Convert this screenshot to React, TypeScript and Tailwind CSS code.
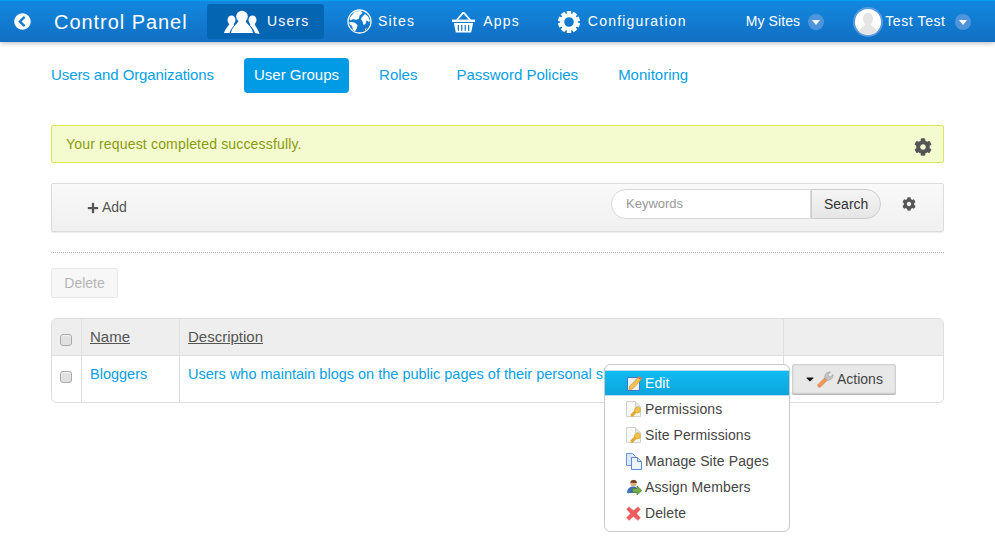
import { FaCaretDown, FaChevronCircleLeft, FaCog, FaPlus } from "react-icons/fa";

const font = "font-['Liberation_Sans',Arial,sans-serif]";

function UsersIcon() {
  return (
    <svg width="36" height="24" viewBox="0 0 36 24" fill="white">
      <circle cx="18" cy="6.500" r="5.800" />
      <path d="M14.500 11c-1 3-6 5-7.500 12h22c-1.500-7-6.500-9-7.500-12z" />
      <ellipse cx="7.500" cy="10" rx="4" ry="4.500" />
      <path d="M5.500 13.500C5 16 1.500 18 0 23h5.500c1-3 3-6 4.500-7.500l-.5-2z" />
      <ellipse cx="28.500" cy="10" rx="4" ry="4.500" />
      <path d="M30.500 13.500c.5 2.500 3.500 5 5 10.500L31 23c-1-3-3-6-5-7.500l.5-2z" />
    </svg>
  );
}

function GlobeIcon() {
  return (
    <svg width="25" height="25" viewBox="0 0 25 25">
      <circle cx="12.500" cy="12.500" r="11.500" fill="none" stroke="white" strokeWidth="1.300" />
      <path
        fill="white"
        d="M8 2.500 14 2l1.500 2-3 2.500-.5 3-3 1.500L6.500 10 3 11.500 2.500 9zM2.500 13l5 .5 3 2.500-.5 3-2 3.500-2-1.500-1-4-2.500-2zM15 8l3-3 3 2.500 2 4-1 1.500-2.500-1.500-1 3.500-2 1-1-3.500-1.500-2.500zM18 20l2-1-2 3z"
      />
    </svg>
  );
}

function BasketIcon() {
  return (
    <svg width="25" height="24" viewBox="0 0 26 24" fill="white">
      <path d="M5 10 12 1.500h2L21 10h-2.300L13 3.500 7.300 10z" />
      <path d="M1 9.500h24v2.500H1z" />
      <path d="M3 13h20l-2 10H5zM7 15v6h1.300v-6zm3.500 0v6h1.300v-6zm3.700 0v6h1.300v-6zm3.500 0v6H19v-6z" fillRule="evenodd" />
    </svg>
  );
}

function ConfigIcon() {
  return (
    <svg width="22" height="22" viewBox="0 0 22 22" fill="white">
      <circle cx="11" cy="11" r="6.800" fill="none" stroke="white" strokeWidth="4" />
      {[0, 36, 72, 108, 144, 180, 216, 252, 288, 324].map((deg) => (
        <rect key={deg} x="8.800" y="0" width="4.400" height="5" transform={`rotate(${deg} 11 11)`} />
      ))}
    </svg>
  );
}

function EditIcon() {
  return (
    <svg width="16" height="16" viewBox="0 0 16 16">
      <rect x="1.500" y="2.500" width="12" height="13" fill="#e8f1fb" stroke="#3f78cf" />
      <path d="M3.500 11.500 12 2.500 15 5 6.500 14 3 14.800z" fill="#f5c050" stroke="#c98a1b" strokeWidth=".6" />
      <path d="M12 2.500 13.500 1 16 3.500 15 5z" fill="#e8764a" />
    </svg>
  );
}

function PermissionIcon() {
  return (
    <svg width="16" height="16" viewBox="0 0 16 16">
      <path d="M.500.500h9l5 5v10H.500z" fill="#f7f7f5" stroke="#d2d2cc" />
      <path d="M9.500.500v5h5" fill="#e6e6e0" stroke="#d2d2cc" />
      <path d="M5.500 16 4.500 13.500 9.500 8.500l2 2L7 15.500z" fill="#e0a92c" />
      <circle cx="11.500" cy="9" r="3" fill="#f2c14a" stroke="#c9951e" strokeWidth=".5" />
    </svg>
  );
}

function PagesIcon() {
  return (
    <svg width="17" height="17" viewBox="0 0 17 17">
      <path d="M.500.500h6l3 3v9h-9z" fill="#dbe8f8" stroke="#6c94d6" />
      <path d="M5.500 4.500h6l4 4v8h-10z" fill="#eef4fc" stroke="#5f8ad2" />
      <path d="M11.500 4.500v4h4" fill="#c9dbf3" stroke="#5f8ad2" />
    </svg>
  );
}

function MembersIcon() {
  return (
    <svg width="16" height="16" viewBox="0 0 16 16">
      <circle cx="7.500" cy="4" r="3.200" fill="#e0ad85" />
      <path d="M4.300 4c0-3.500 6.500-4.200 6.500 0-2 0-4-.8-6.500 0z" fill="#6d3f1e" />
      <path d="M1 14c0-4 2.500-6.500 6-6.500s5 2 5 6.500z" fill="#3f6fb5" />
      <path d="M2.500 11 .5 13l2 2z" fill="#4a8ed8" />
      <path d="M6.500 9.500H11V7l5 4.500-5 4.500v-2.500H6.500z" fill="#74ab4c" stroke="#4a7a2e" strokeWidth=".6" />
    </svg>
  );
}

function DeleteIcon() {
  return (
    <svg width="15" height="15" viewBox="0 0 15 15">
      <path d="M3 .8 7.500 4.600 12 .8 14.500 3.200 10.600 7.500 14.500 11.800 12 14.400 7.500 10.500 3 14.400.5 11.800 4.400 7.500.5 3.200z" fill="#ef5a5e" stroke="#e58a8c" strokeWidth=".5" />
    </svg>
  );
}

function WrenchIcon() {
  return (
    <svg width="17" height="17" viewBox="0 0 17 17">
      <path d="M1 13.500 8.500 6l2.500 2.500L3.500 16a1.800 1.800 0 0 1-2.500-2.500z" fill="#f0955a" stroke="#d97a3c" strokeWidth=".5" />
      <path d="M8 7.500C7 4 9.500.5 13.500 1L11 3.500l.5 2 2 .5L16 3.500c.5 4-3 6.500-6.500 5.500z" fill="#c4c4c4" stroke="#8d8d8d" strokeWidth=".5" />
    </svg>
  );
}

function Caret() {
  return (
    <span className="flex h-4 w-4 items-center justify-center rounded-full bg-[#4f95dc]">
      <span className="mt-[1px] h-0 w-0 border-x-[4.500px] border-t-[5px] border-x-transparent border-t-white" />
    </span>
  );
}

function Checkbox() {
  return <span className="block h-[12px] w-[12px] rounded-[3px] border border-[#a9a9a9] bg-[#e0e0e0] shadow-[inset_0_1px_1px_#f5f5f5]" />;
}

const menuItems = [
  { label: "Permissions", icon: <PermissionIcon /> },
  { label: "Site Permissions", icon: <PermissionIcon /> },
  { label: "Manage Site Pages", icon: <PagesIcon /> },
  { label: "Assign Members", icon: <MembersIcon /> },
  { label: "Delete", icon: <DeleteIcon /> },
];

function ActionsMenu() {
  return (
    <div className="absolute left-[553px] top-[46px] h-[168px] w-[186px] rounded-[6px] border border-[#c8c8c8] bg-white pt-[5px]">
      <div className="flex h-[26px] items-center border-y border-[#b5dff2] bg-gradient-to-b from-[#10bcf2] to-[#0ba5dc] pl-[21px] text-[14px] tracking-[0.100px] text-white">
        <span className="flex w-[19px] shrink-0"><EditIcon /></span>
        <span>Edit</span>
      </div>
      {menuItems.map((item) => (
        <div key={item.label} className="flex h-[26px] items-center pl-[21px] text-[14px] tracking-[0.100px] text-[#444]">
          <span className="flex w-[19px] shrink-0">{item.icon}</span>
          <span>{item.label}</span>
        </div>
      ))}
    </div>
  );
}

export default function App() {
  return (
    <div className={`${font} h-[537px] w-[995px] overflow-hidden bg-white`}>
      <header className="flex h-[42px] items-center border-t-[1px] border-[#00a0ee] bg-gradient-to-b from-[#1288e0] to-[#116fc2] text-white shadow-[0_1px_5px_rgba(0,0,0,0.3)]">
        <FaChevronCircleLeft className="ml-[14px] h-[17px] w-[17px]" />
        <span className="ml-[23px] w-[133px] whitespace-nowrap text-[20px] tracking-[0.950px]">Control Panel</span>
        <nav className="ml-[20px] flex items-center text-[14px] tracking-[1.200px]">
          <span className="flex h-[35px] w-[117px] items-center rounded-[3px] bg-[#0465b3] pl-[17px]">
            <UsersIcon />
            <span className="ml-[7px]">Users</span>
          </span>
          <span className="ml-[23px] flex items-center">
            <GlobeIcon />
            <span className="ml-[6px]">Sites</span>
          </span>
          <span className="ml-[36px] flex items-center">
            <BasketIcon />
            <span className="ml-[7px]">Apps</span>
          </span>
          <span className="ml-[38px] flex items-center">
            <ConfigIcon />
            <span className="ml-[8px]">Configuration</span>
          </span>
        </nav>
        <span className="ml-[59px] flex items-center gap-[8px] text-[14px] tracking-[0.100px]">
          My Sites
          <Caret />
        </span>
        <span className="ml-[29px] flex items-center text-[14px]">
          <span className="relative flex h-[30px] w-[30px] items-center justify-center overflow-hidden rounded-full border-2 border-[#5c9be0] bg-white">
            <svg width="26" height="26" viewBox="0 0 26 26" fill="#e4e4e4">
              <ellipse cx="13" cy="10" rx="5" ry="6.500" />
              <path d="M10 15c0 3-5 3-6 8 3 3 15 3 18 0-1-5-6-5-6-8z" />
            </svg>
          </span>
          <span className="ml-[2px] tracking-[0.600px]">Test Test</span>
          <span className="ml-[9px]"><Caret /></span>
        </span>
      </header>

      <main className="px-[51px]">
        <div className="mt-[16px] flex items-center text-[15px] text-[#089fe6]">
          <span className="tracking-[-0.090px]">Users and Organizations</span>
          <span className="ml-[30px] flex h-[35px] items-center rounded-[4px] bg-[#009ae5] px-[10px] text-white">User Groups</span>
          <span className="ml-[30px]">Roles</span>
          <span className="ml-[39px]">Password Policies</span>
          <span className="ml-[40px]">Monitoring</span>
        </div>

        <div className="mt-[32px] flex h-[38px] w-[893px] items-center justify-between rounded-[2px] border border-[#d9e75a] bg-[#f3fbcf] pl-[14px] pr-[11px] text-[14px] tracking-[0.170px] text-[#8a9a0c]">
          <span>Your request completed successfully.</span>
          <FaCog className="mt-[5px] h-[18px] w-[18px] text-[#555]" />
        </div>

        <div className="mt-[20px] flex h-[49px] w-[893px] items-center rounded-[2px] border border-[#dcdcdc] bg-gradient-to-b from-[#f9f9f9] to-[#f0f0f0] shadow-[0_1px_1px_#eee]">
          <span className="ml-[35px] flex items-center gap-[3px] text-[14px] text-[#555]">
            <FaPlus className="h-[12px] w-[12px]" />
            Add
          </span>
          <div className="mb-[7px] ml-auto flex h-[30px] items-center">
            <span className="flex h-[30px] w-[200px] items-center rounded-l-[15px] border border-[#d8d8d8] bg-white pl-[14px] text-[13px] text-[#999]">Keywords</span>
            <span className="flex h-[30px] w-[70px] items-center rounded-r-[15px] border border-l-[1px] border-[#ccc] bg-gradient-to-b from-[#f5f5f5] to-[#e6e6e6] pl-[12px] text-[14px] text-[#333]">Search</span>
          </div>
          <FaCog className="mb-[7px] ml-[21px] mr-[27px] h-[14px] w-[14px] text-[#555]" />
        </div>

        <div className="mt-[20px] w-[893px] border-t border-dotted border-[#aaa]" />

        <div className="mt-[15px] flex h-[30px] w-[67px] items-center justify-center rounded-[2px] border border-[#e8e8e8] bg-[#f7f7f7] text-[14px] text-[#b5b5b5]">Delete</div>

        <div className="relative mt-[20px] w-[893px]">
          <div className="overflow-hidden rounded-[5px] border border-[#dfdfdf]">
            <div className="grid h-[37px] grid-cols-[30px_98px_604px_1fr] border-b border-[#dfdfdf] bg-[#eeeeee] text-[15px] text-[#555]">
              <div className="flex items-center justify-center border-r border-[#dfdfdf] pr-[2px] pt-[5px]"><Checkbox /></div>
              <div className="flex items-center border-r border-[#dfdfdf] pl-[8px] underline">Name</div>
              <div className="flex items-center border-r border-[#dfdfdf] pl-[8px] underline">Description</div>
              <div />
            </div>
            <div className="grid h-[46px] grid-cols-[30px_98px_604px_1fr] text-[14.500px] text-[#089fe6]">
              <div className="flex justify-center border-r border-[#dfdfdf] pr-[2px] pt-[15px]"><Checkbox /></div>
              <div className="border-r border-[#dfdfdf] pl-[8px] pt-[8px]">Bloggers</div>
              <div className="overflow-hidden whitespace-nowrap border-r border-[#dfdfdf] pl-[8px] pt-[8px]">Users who maintain blogs on the public pages of their personal sites.</div>
              <div className="pl-[8px] pt-[8px]">
                <span className="flex h-[30px] w-[104px] items-center rounded-[2px] border border-[#cfcfcf] bg-[#e8e8e8] pl-[11px] text-[14px] text-[#444] shadow-[0_1px_0_#b5b5b5,inset_0_0_2px_#ccc]">
                  <FaCaretDown className="h-[12px] w-[12px] text-[#111]" />
                  <span className="ml-[1px]"><WrenchIcon /></span>
                  <span className="ml-[3px]">Actions</span>
                </span>
              </div>
            </div>
          </div>
          <ActionsMenu />
        </div>
      </main>
    </div>
  );
}
